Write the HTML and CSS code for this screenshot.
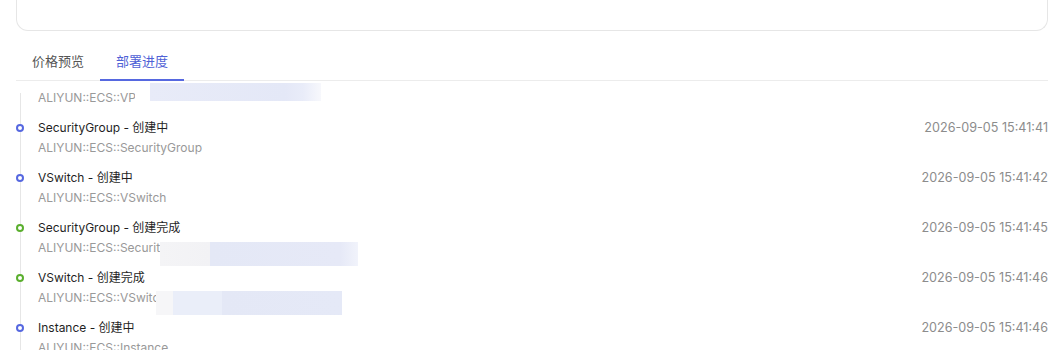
FILE: index.html
```
<html>
  <head>
    <meta charset="utf-8" />
    <meta name="viewport" content="width=device-width, initial-scale=1.0" />
    <title>部署进度</title>
    <link rel="stylesheet" href="styles.css">
  </head>
  <body>
    <div class="wrapper">
      <div class="card"></div>
      <div class="tabs">
        <div class="tab">价格预览</div>
        <div class="tab active">部署进度</div>
      </div>
      <div class="timeline">
        <div class="item partial">
          <div class="content">
            <div class="sub">ALIYUN::ECS::VP<span class="mask mask-vpc"></span></div>
          </div>
        </div>
        <div class="item">
          <span class="dot blue"></span>
          <div class="content">
            <div class="title">SecurityGroup - 创建中</div>
            <div class="sub">ALIYUN::ECS::SecurityGroup</div>
          </div>
          <div class="time">2026-09-05 15:41:41</div>
        </div>
        <div class="item">
          <span class="dot blue"></span>
          <div class="content">
            <div class="title">VSwitch - 创建中</div>
            <div class="sub">ALIYUN::ECS::VSwitch</div>
          </div>
          <div class="time">2026-09-05 15:41:42</div>
        </div>
        <div class="item">
          <span class="dot green"></span>
          <div class="content">
            <div class="title">SecurityGroup - 创建完成</div>
            <div class="sub">ALIYUN::ECS::SecurityGroup<span class="mask mask-sg"></span></div>
          </div>
          <div class="time">2026-09-05 15:41:45</div>
        </div>
        <div class="item">
          <span class="dot green"></span>
          <div class="content">
            <div class="title">VSwitch - 创建完成</div>
            <div class="sub">ALIYUN::ECS::VSwitch<span class="mask mask-vsw"></span></div>
          </div>
          <div class="time">2026-09-05 15:41:46</div>
        </div>
        <div class="item">
          <span class="dot blue"></span>
          <div class="content">
            <div class="title">Instance - 创建中</div>
            <div class="sub">ALIYUN::ECS::Instance</div>
          </div>
          <div class="time">2026-09-05 15:41:46</div>
        </div>
      </div>
    </div>
  </body>
</html>
```
FILE: styles.css
```
* {
  margin: 0;
  padding: 0;
  box-sizing: border-box;
}
body {
  background: #fff;
  font-family: "Inter", "Noto Sans CJK SC", sans-serif;
  color: #262626;
  overflow: hidden;
}
.wrapper {
  padding: 0 16px;
}
.card {
  height: 31px;
  border: 1px solid #e6e6e6;
  border-top: none;
  border-radius: 0 0 12px 12px;
}
.tabs {
  display: flex;
  margin-top: 11px;
  border-bottom: 1px solid #ececec;
}
.tab {
  position: relative;
  padding: 8px 16px;
  font-size: 13px;
  line-height: 22px;
  color: #555;
}
.tab.active {
  color: #4f61d6;
}
.tab.active::after {
  content: "";
  position: absolute;
  left: 0;
  right: 0;
  bottom: -1px;
  height: 2px;
  background: #5668e0;
}
.timeline {
  padding-bottom: 20px;
}
.item {
  position: relative;
  display: flex;
  align-items: flex-start;
  padding-bottom: 10px;
}
.item::before {
  content: "";
  position: absolute;
  left: 4px;
  top: 0;
  bottom: 0;
  width: 1px;
  background: #e6e6e6;
}
.item.partial {
  padding-top: 7px;
}
.item.partial::before {
  top: 12px;
}
.dot {
  position: relative;
  width: 8px;
  height: 8px;
  margin-top: 6px;
  border: 2px solid #5668e0;
  border-radius: 50%;
  background: #fff;
}
.dot.green {
  border-color: #5aaf2e;
}
.content {
  flex: 1;
  margin-left: 14px;
}
.partial .content {
  margin-left: 22px;
}
.title {
  font-size: 12px;
  line-height: 20px;
  color: #1f1f1f;
}
.sub {
  position: relative;
  font-size: 12px;
  line-height: 20px;
  color: #999;
}
.time {
  font-size: 12.6px;
  line-height: 20px;
  color: #8c8c8c;
}
.mask {
  position: absolute;
  height: 24px;
}
.mask-vpc {
  left: 97px;
  top: -5px;
  width: 186px;
  height: 18px;
  background: linear-gradient(90deg, #fff 0, #fff 15px, #e8ebf8 15px, #e4e8f7 150px, #e9ecf9 168px, #f7f8fc 186px);
}
.mask-sg {
  left: 122px;
  top: 4px;
  width: 198px;
  background: linear-gradient(90deg, #f4f4f6 0, #f2f2f5 50px, #e4e8f6 50px, #e6e9f7 180px, #f1f3fb 198px);
}
.mask-vsw {
  left: 118px;
  top: 3px;
  width: 186px;
  background: linear-gradient(90deg, #f6f6f8 0, #f6f6f8 17px, #eaeef9 17px, #eaeef9 66px, #e4e8f6 66px, #e5e9f7 186px);
}
```
